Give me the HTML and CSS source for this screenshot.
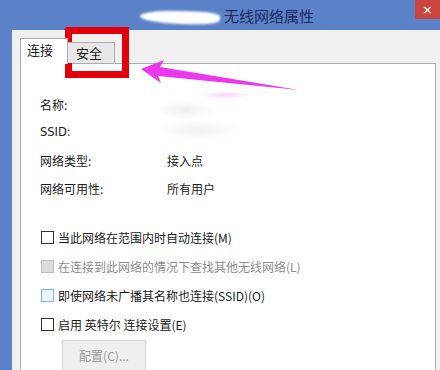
FILE: index.html
```html
<!DOCTYPE html>
<html lang="zh-CN">
<head>
<meta charset="utf-8">
<title>无线网络属性</title>
<link rel="stylesheet" href="styles.css">
</head>
<body>
<div class="window">
  <div class="titlebar">
    <div class="title-group">
      <span class="redacted"></span>
      <span class="title">无线网络属性</span>
    </div>
    <span class="close">×</span>
  </div>
  <div class="frame">
    <div class="edge"></div>
    <div class="client">
      <div class="tabs">
        <div class="tab active">连接</div>
        <div class="tab">安全</div>
      </div>
      <div class="panel">
        <div class="info">
          <span>名称:</span><span></span>
          <span class="latin">SSID:</span><span></span>
          <span>网络类型:</span><span>接入点</span>
          <span>网络可用性:</span><span>所有用户</span>
        </div>
        <div class="checks">
          <div class="check"><span class="box"></span><span>当此网络在范围内时自动连接(M)</span></div>
          <div class="check disabled"><span class="box"></span><span>在连接到此网络的情况下查找其他无线网络(L)</span></div>
          <div class="check hover"><span class="box"></span><span>即使网络未广播其名称也连接(SSID)(O)</span></div>
          <div class="check"><span class="box"></span><span>启用 英特尔 连接设置(E)</span></div>
        </div>
        <div class="button">配置(C)...</div>
      </div>
    </div>
  </div>

  <div class="smudge"></div>
  <div class="redbox"></div>
  <svg class="arrow" width="440" height="370" viewBox="0 0 440 370">
    <polygon points="141,69 164,60 160,67 299,90 158,76 161,83" fill="#ec38ec"/>
  </svg>
</div>
</body>
</html>
```

FILE: styles.css
```css
html, body {
  margin: 0;
  padding: 0;
}
body {
  width: 440px;
  height: 370px;
  overflow: hidden;
  background: #f0f0f0;
  font-family: "Noto Sans CJK SC", "Noto Sans", "Liberation Sans", sans-serif;
  font-size: 12px;
  color: #1a1a1a;
}
.window {
  position: relative;
  height: 370px;
  display: flex;
  flex-direction: column;
}
.titlebar {
  height: 30px;
  flex: none;
  background: #5b82c9;
  display: flex;
  align-items: flex-start;
}
.title-group {
  margin-left: 140px;
  margin-top: 6px;
  height: 19px;
  display: flex;
  align-items: center;
}
.redacted {
  width: 80px;
  height: 13px;
  margin-top: 4px;
  margin-right: 4px;
  background: #fff;
  border-radius: 50% 30% 40% 50%;
  transform: rotate(2deg);
  filter: blur(0.8px);
}
.title {
  font-size: 15px;
  line-height: 19px;
  color: #1d2c5a;
}
.close {
  margin-left: auto;
  width: 25px;
  height: 19px;
  background: #c9463f;
  color: #fff;
  font-family: "DejaVu Sans", sans-serif;
  font-size: 13px;
  line-height: 19px;
  text-align: center;
}
.frame {
  flex: 1;
  display: flex;
  min-height: 0;
}
.edge {
  width: 12px;
  flex: none;
  background: #5b82c9;
}
.client {
  flex: 1;
  background: #f0f0f0;
  padding: 8px 4px 0 8px;
  display: flex;
  flex-direction: column;
}
.tabs {
  display: flex;
  align-items: flex-end;
  height: 26px;
  margin-bottom: -1px;
  position: relative;
  z-index: 1;
}
.tab {
  box-sizing: border-box;
  width: 48px;
  height: 21px;
  margin-left: -1px;
  padding-left: 8px;
  border: 1px solid #adadad;
  border-bottom: none;
  background: #e8e8e8;
  font-size: 13px;
  line-height: 20px;
  margin-bottom: 1px;
}
.tab.active {
  height: 26px;
  margin-left: 0;
  margin-bottom: 0;
  padding-left: 6px;
  background: #fff;
  line-height: 22px;
  order: 0;
}
.tab.active + .tab {
  margin-left: -1px;
}
.panel {
  flex: 1;
  background: #fff;
  border: 1px solid #adadad;
  border-bottom: none;
  padding: 26px 0 0 19px;
}
.info {
  display: grid;
  grid-template-columns: 127px auto;
  grid-auto-rows: 28px;
  align-items: center;
}
.latin {
  font-family: "DejaVu Sans", "Noto Sans", sans-serif;
  font-size: 11.5px;
}
.checks {
  margin-top: 21px;
}
.check {
  height: 29px;
  display: flex;
  align-items: center;
  gap: 4px;
}
.box {
  box-sizing: border-box;
  width: 13px;
  height: 13px;
  margin-left: 1px;
  border: 1px solid #333;
  background: #fff;
}
.check.disabled {
  color: #8c8c8c;
}
.check.disabled .box {
  border-color: #bdbdbd;
  background: #dcdcdc;
}
.check.hover .box {
  border-color: #7fb6d2;
  background: #eaf6fb;
}
.button {
  box-sizing: border-box;
  margin-left: 22px;
  margin-top: 1px;
  width: 84px;
  height: 34px;
  background: #efefef;
  border: 1px solid #d4d4d4;
  color: #9a9a9a;
  text-align: center;
  line-height: 30px;
}
.smudge {
  position: absolute;
  left: 160px;
  top: 90px;
  width: 100px;
  height: 60px;
  background:
    radial-gradient(ellipse 25px 4px at 65px 5px, rgba(240, 160, 240, 0.45), transparent),
    radial-gradient(ellipse 30px 10px at 25px 20px, rgba(225, 225, 228, 0.55), transparent),
    radial-gradient(ellipse 45px 11px at 38px 40px, rgba(228, 228, 232, 0.5), transparent);
}
.redbox {
  position: absolute;
  left: 65px;
  top: 27px;
  width: 64px;
  height: 51px;
  box-sizing: border-box;
  border: 7px solid #e4000b;
}
.arrow {
  position: absolute;
  left: 0;
  top: 0;
}
```
